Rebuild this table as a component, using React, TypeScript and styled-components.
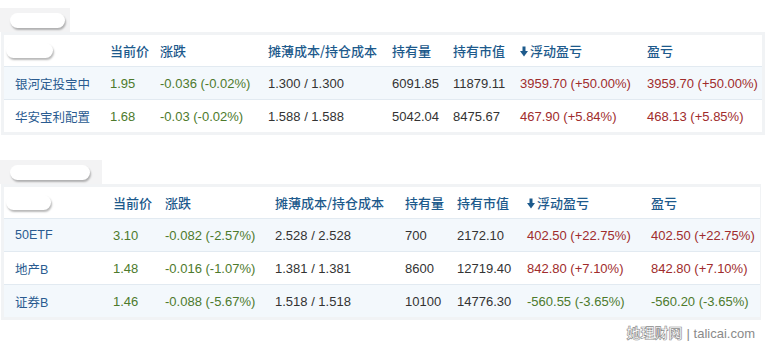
import React from "react";
import styled, { createGlobalStyle } from "styled-components";

const Global = createGlobalStyle`
  html, body { margin: 0; padding: 0; background: #ffffff; }
  body { font-family: "Liberation Sans", "Noto Sans CJK SC", sans-serif; font-size: 13px; color: #333; }
`;

const Page = styled.div`
  width: 765px;
  height: 346px;
  overflow: hidden;
  display: flex;
  flex-direction: column;
  padding-top: 8px;
  box-sizing: border-box;
`;

const Block = styled.section<{ $gap: number }>`
  display: flex;
  flex-direction: column;
  margin-bottom: ${(p) => p.$gap}px;
`;

const TabBar = styled.div<{ $w: number }>`
  width: ${(p) => p.$w}px;
  height: 24px;
  background: #f3f3f4;
  display: flex;
  align-items: center;
  padding-left: 10px;
  box-sizing: border-box;
`;

const Pill = styled.div<{ $w: number; $h: number }>`
  width: ${(p) => p.$w}px;
  height: ${(p) => p.$h}px;
  background: #ffffff;
  border-radius: 8px;
  box-shadow: 1px 2px 2px rgba(0, 0, 0, 0.28);
`;

const Frame = styled.div<{ $w: number }>`
  width: ${(p) => p.$w}px;
  border: 3px solid #f1f3f5;
  box-sizing: border-box;
  margin-left: 1px;
`;

const Table = styled.table`
  border-collapse: collapse;
  table-layout: fixed;
  width: 100%;
`;

const HeadCell = styled.th`
  height: 31px;
  padding: 0 0 0 7px;
  text-align: left;
  font-family: "Noto Sans CJK SC", "Liberation Sans", sans-serif;
  font-weight: 500;
  font-size: 13px;
  color: #1d5a8c;
  background: #ffffff;
  white-space: nowrap;
  vertical-align: middle;
`;

const Row = styled.tr<{ $alt: boolean }>`
  background: ${(p) => (p.$alt ? "#f3f8fc" : "#ffffff")};
  border-top: 1px solid #e2eaf1;
`;

type Tone = "name" | "green" | "red" | "plain";
const toneColor: Record<Tone, string> = {
  name: "#2a5b90",
  green: "#4d7a2c",
  red: "#a02c2c",
  plain: "#333333",
};

const Cell = styled.td<{ $tone: Tone }>`
  height: 32px;
  padding: 0 0 0 ${(p) => (p.$tone === "name" ? 11 : 7)}px;
  white-space: nowrap;
  color: ${(p) => toneColor[p.$tone]};
  font-family: "Liberation Sans", "Noto Sans CJK SC", sans-serif;
  font-size: ${(p) => (p.$tone === "name" ? 12.5 : 13)}px;
  vertical-align: middle;
`;

const ArrowWrap = styled.span`
  display: inline-flex;
  align-items: center;
  margin-right: 2px;
  vertical-align: -1px;
`;

const PillCell = styled.div`
  margin-left: -5px;
`;

const Footer = styled.div`
  display: flex;
  justify-content: flex-end;
  align-items: baseline;
  gap: 4px;
  padding-right: 10px;
  margin-top: auto;
  margin-bottom: 4px;
`;

const MarkCn = styled.span`
  font-family: "Noto Sans CJK SC", sans-serif;
  font-size: 14px;
  font-weight: 700;
  color: #ffffff;
  -webkit-text-stroke: 0.6px #8a8a8a;
`;

const MarkEn = styled.span`
  font-family: "Liberation Sans", sans-serif;
  font-size: 13px;
  color: #8a8a8a;
`;

const DownArrow = () => (
  <ArrowWrap>
    <svg width="8" height="11" viewBox="0 0 8 11">
      <rect x="2.5" y="0.5" width="3" height="5" fill="#1d5a8c" />
      <polygon points="0,5 8,5 4,10.5" fill="#1d5a8c" />
    </svg>
  </ArrowWrap>
);

type RowData = {
  name: string;
  price: string;
  change: string;
  cost: string;
  qty: string;
  value: string;
  float: string;
  pl: string;
  plTone: Tone;
};

const headers = ["当前价", "涨跌", "摊薄成本/持仓成本", "持有量", "持有市值", "浮动盈亏", "盈亏"];

type TableSpec = {
  tabW: number;
  pillW: number;
  frameW: number;
  headPillW: number;
  cols: number[];
  rows: RowData[];
  gap: number;
};

const t1: TableSpec = {
  tabW: 70,
  pillW: 55,
  frameW: 764,
  headPillW: 47,
  gap: 25,
  cols: [99, 50, 108, 124, 61, 67, 127, 122],
  rows: [
    {
      name: "银河定投宝中",
      price: "1.95",
      change: "-0.036 (-0.02%)",
      cost: "1.300 / 1.300",
      qty: "6091.85",
      value: "11879.11",
      float: "3959.70 (+50.00%)",
      pl: "3959.70 (+50.00%)",
      plTone: "red",
    },
    {
      name: "华安宝利配置",
      price: "1.68",
      change: "-0.03 (-0.02%)",
      cost: "1.588 / 1.588",
      qty: "5042.04",
      value: "8475.67",
      float: "467.90 (+5.84%)",
      pl: "468.13 (+5.85%)",
      plTone: "red",
    },
  ],
};

const t2: TableSpec = {
  tabW: 102,
  pillW: 80,
  frameW: 760,
  headPillW: 45,
  gap: 0,
  cols: [102, 52, 110, 130, 52, 70, 124, 116],
  rows: [
    {
      name: "50ETF",
      price: "3.10",
      change: "-0.082 (-2.57%)",
      cost: "2.528 / 2.528",
      qty: "700",
      value: "2172.10",
      float: "402.50 (+22.75%)",
      pl: "402.50 (+22.75%)",
      plTone: "red",
    },
    {
      name: "地产B",
      price: "1.48",
      change: "-0.016 (-1.07%)",
      cost: "1.381 / 1.381",
      qty: "8600",
      value: "12719.40",
      float: "842.80 (+7.10%)",
      pl: "842.80 (+7.10%)",
      plTone: "red",
    },
    {
      name: "证券B",
      price: "1.46",
      change: "-0.088 (-5.67%)",
      cost: "1.518 / 1.518",
      qty: "10100",
      value: "14776.30",
      float: "-560.55 (-3.65%)",
      pl: "-560.20 (-3.65%)",
      plTone: "green",
    },
  ],
};

const Holdings: React.FC<{ spec: TableSpec }> = ({ spec }) => (
  <Block $gap={spec.gap}>
    <TabBar $w={spec.tabW}>
      <Pill $w={spec.pillW} $h={15} />
    </TabBar>
    <Frame $w={spec.frameW}>
      <Table>
        <colgroup>
          {spec.cols.map((w, i) => (
            <col key={i} style={{ width: w }} />
          ))}
        </colgroup>
        <thead>
          <tr>
            <HeadCell>
              <PillCell>
                <Pill $w={spec.headPillW} $h={15} />
              </PillCell>
            </HeadCell>
            {headers.map((h) => (
              <HeadCell key={h}>
                {h === "浮动盈亏" && <DownArrow />}
                {h}
              </HeadCell>
            ))}
          </tr>
        </thead>
        <tbody>
          {spec.rows.map((r, i) => (
            <Row key={r.name} $alt={i % 2 === 0}>
              <Cell $tone="name">{r.name}</Cell>
              <Cell $tone="green">{r.price}</Cell>
              <Cell $tone="green">{r.change}</Cell>
              <Cell $tone="plain">{r.cost}</Cell>
              <Cell $tone="plain">{r.qty}</Cell>
              <Cell $tone="plain">{r.value}</Cell>
              <Cell $tone={r.plTone}>{r.float}</Cell>
              <Cell $tone={r.plTone}>{r.pl}</Cell>
            </Row>
          ))}
        </tbody>
      </Table>
    </Frame>
  </Block>
);

export default function App() {
  return (
    <>
      <Global />
      <Page>
        <Holdings spec={t1} />
        <Holdings spec={t2} />
        <Footer>
          <MarkCn>她理财网</MarkCn>
          <MarkEn>| talicai.com</MarkEn>
        </Footer>
      </Page>
    </>
  );
}
